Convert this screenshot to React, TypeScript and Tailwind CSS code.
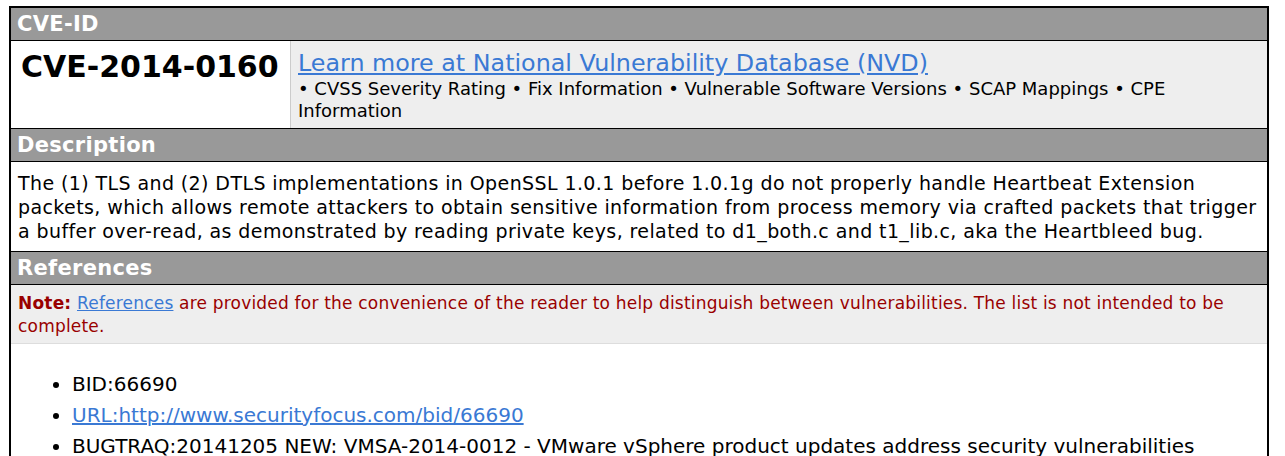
import React from "react";

const sectionHead =
  "bg-[#999999] text-white font-bold text-[21px] tracking-[0.3px] leading-[32px] px-[6px] border-b border-black";

export default function App() {
  return (
    <div
      className="min-h-screen bg-white pt-[6px] pl-[9px]"
      style={{ fontFamily: '"DejaVu Sans", Verdana, sans-serif' }}
    >
      <div className="w-[1260px] border-2 border-black">
        <div className={sectionHead}>CVE-ID</div>

        <div className="flex border-b border-black">
          <div className="w-[280px] shrink-0 bg-white border-r border-[#cccccc] pl-[10px] pt-[7px] h-[87px]">
            <span className="font-bold text-[30px] leading-[38px] text-black">
              CVE-2014-0160
            </span>
          </div>
          <div className="flex-1 bg-[#eeeeee] pl-[7px] pr-[80px] pt-[7px]">
            <a
              href="#"
              className="text-[23.8px] leading-[31px] text-[#3a79d4] underline"
            >
              Learn more at National Vulnerability Database (NVD)
            </a>
            <div className="text-[18px] leading-[22px] text-black -mt-[1px]">
              • CVSS Severity Rating • Fix Information • Vulnerable Software
              Versions • SCAP Mappings • CPE Information
            </div>
          </div>
        </div>

        <div className={sectionHead}>Description</div>
        <div className="pl-[7px] pr-[1px] pt-[9px] pb-[8px] text-[19px] tracking-[0.4px] leading-[24px] text-black border-b border-black">
          The (1) TLS and (2) DTLS implementations in OpenSSL 1.0.1 before
          1.0.1g do not properly handle Heartbeat Extension
          <br />
          packets, which allows remote attackers to obtain sensitive
          information from process memory via crafted packets that trigger
          <br />a buffer over-read, as demonstrated by reading private keys,
          related to d1_both.c and t1_lib.c, aka the Heartbleed bug.
        </div>

        <div className={sectionHead}>References</div>
        <div className="bg-[#eeeeee] border-b border-[#dddddd] px-[7px] pt-[7px] pb-[5px] text-[17px] tracking-[0.2px] leading-[23px] text-[#990000]">
          <span className="font-bold">Note:</span>{" "}
          <a href="#" className="text-[#3a79d4] underline">
            References
          </a>{" "}
          are provided for the convenience of the reader to help distinguish
          between vulnerabilities. The list is not intended to be complete.
        </div>

        <ul className="list-disc pl-[61px] pt-[25px] pb-[10px] text-[20px] leading-[31px] text-black">
          <li>BID:66690</li>
          <li>
            <a href="#" className="text-[#3a79d4] underline">
              URL:http://www.securityfocus.com/bid/66690
            </a>
          </li>
          <li>
            BUGTRAQ:20141205 NEW: VMSA-2014-0012 - VMware vSphere product
            updates address security vulnerabilities
          </li>
        </ul>
      </div>
    </div>
  );
}
